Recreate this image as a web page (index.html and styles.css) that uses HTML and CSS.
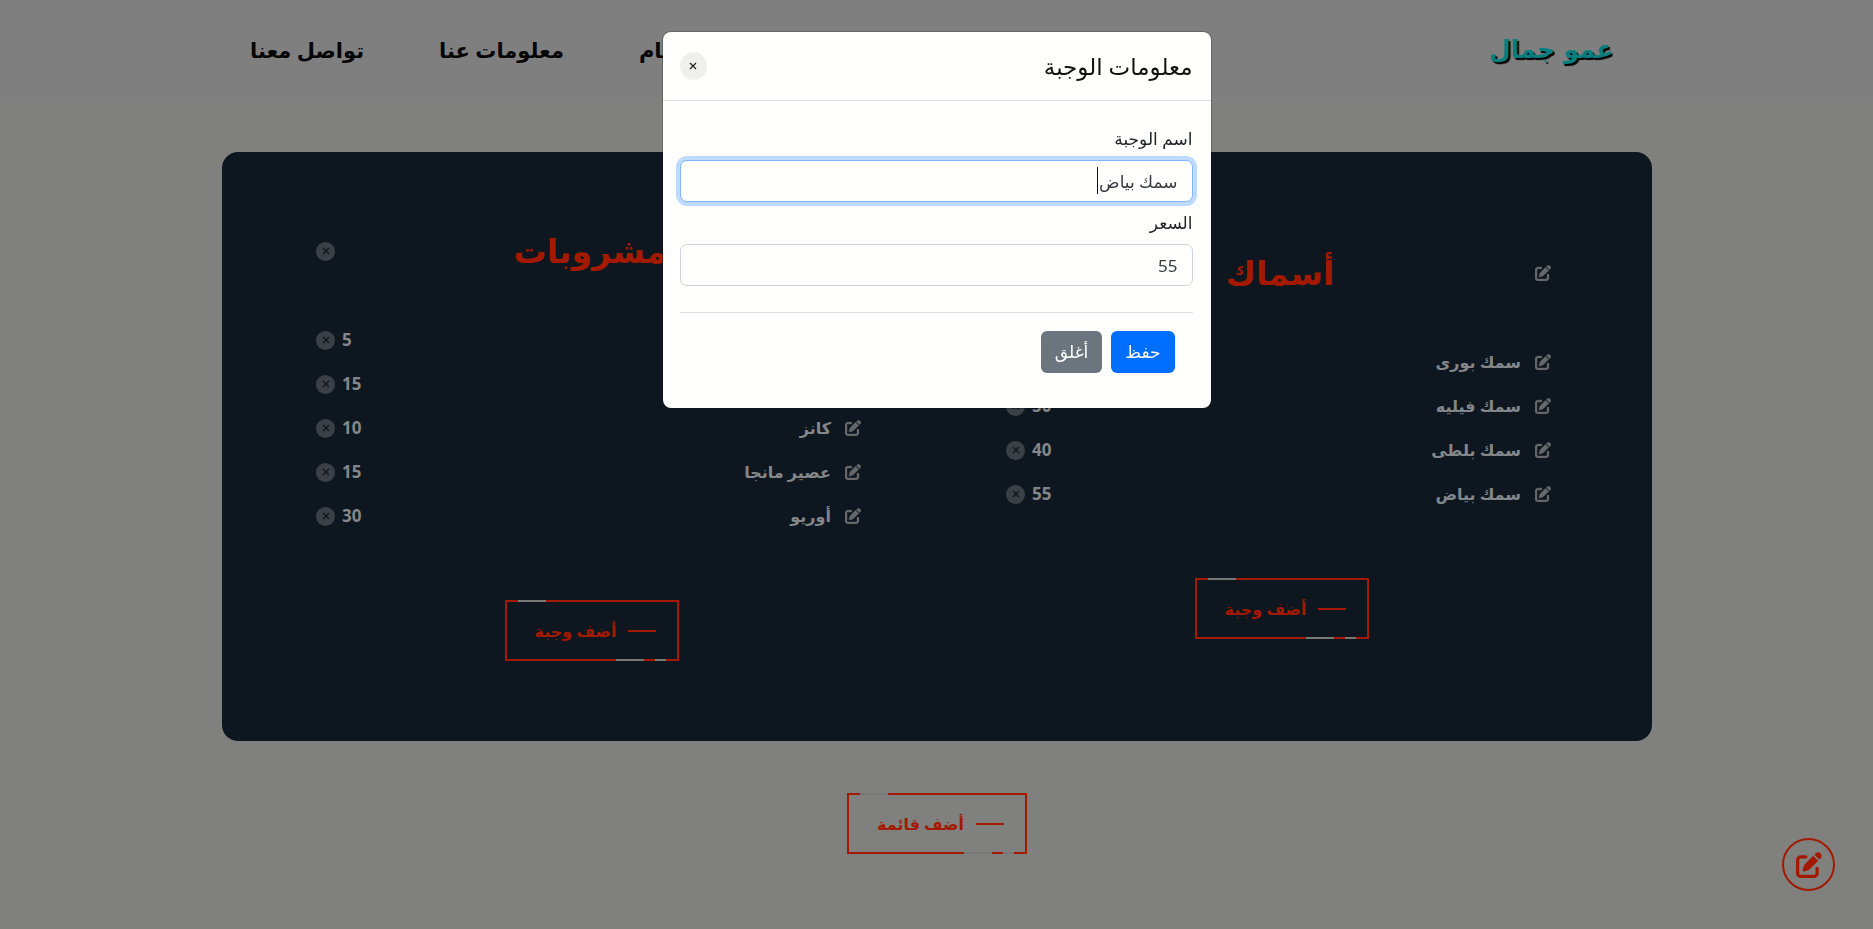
FILE: index.html
```html
<!DOCTYPE html>
<html lang="ar" dir="rtl">
<head>
<meta charset="utf-8">
<title>عمو جمال</title>
<link rel="stylesheet" href="styles.css">
</head>
<body>
<svg class="sprite" aria-hidden="true">
  <symbol id="edit" viewBox="0 0 512 512"><path d="M471.6 21.7c-21.9-21.9-57.3-21.9-79.2 0L362.3 51.7l97.9 97.9 30.1-30.1c21.9-21.9 21.9-57.3 0-79.2L471.6 21.7zm-299.2 220c-6.1 6.1-10.8 13.6-13.5 21.9l-29.6 88.8c-2.9 8.6-.6 18.1 5.8 24.6s15.9 8.7 24.6 5.8l88.8-29.6c8.2-2.7 15.7-7.4 21.9-13.5L437.7 172.3 339.7 74.3 172.4 241.7zM96 64C43 64 0 107 0 160V416c0 53 43 96 96 96H352c53 0 96-43 96-96V320c0-17.7-14.3-32-32-32s-32 14.3-32 32v96c0 17.7-14.3 32-32 32H96c-17.7 0-32-14.3-32-32V160c0-17.7 14.3-32 32-32h96c17.7 0 32-14.3 32-32s-14.3-32-32-32H96z"/></symbol>
  <symbol id="x" viewBox="0 0 8 8"><path d="M1 1l6 6M7 1L1 7" fill="none" stroke="currentColor" stroke-width="1.3"/></symbol>
</svg>
<header class="site-header">
  <a class="logo" href="#">عمو جمال</a>
  <nav class="nav">
    <a href="#">الرئيسية</a>
    <a href="#">قائمة الطعام</a>
    <a href="#">معلومات عنا</a>
    <a href="#">تواصل معنا</a>
  </nav>
</header>
<main>
  <div class="menu-card">
    <section class="menu">
      <div class="menu-head">
        <button class="icon-btn" aria-label="تعديل القائمة"><svg class="edit"><use href="#edit"/></svg></button>
        <h2>أسماك</h2>
        <button class="remove" aria-label="حذف القائمة"><svg><use href="#x"/></svg></button>
      </div>
      <ul class="items">
        <li><button class="icon-btn" aria-label="تعديل"><svg class="edit"><use href="#edit"/></svg></button><span class="name">سمك بورى</span><span class="price">40</span><button class="remove" aria-label="حذف"><svg><use href="#x"/></svg></button></li>
        <li><button class="icon-btn" aria-label="تعديل"><svg class="edit"><use href="#edit"/></svg></button><span class="name">سمك فيليه</span><span class="price">50</span><button class="remove" aria-label="حذف"><svg><use href="#x"/></svg></button></li>
        <li><button class="icon-btn" aria-label="تعديل"><svg class="edit"><use href="#edit"/></svg></button><span class="name">سمك بلطى</span><span class="price">40</span><button class="remove" aria-label="حذف"><svg><use href="#x"/></svg></button></li>
        <li><button class="icon-btn" aria-label="تعديل"><svg class="edit"><use href="#edit"/></svg></button><span class="name">سمك بياض</span><span class="price">55</span><button class="remove" aria-label="حذف"><svg><use href="#x"/></svg></button></li>
      </ul>
      <button class="add"><span class="dash"></span>أضف وجبة</button>
    </section>
    <section class="menu">
      <div class="menu-head">
        <button class="icon-btn" aria-label="تعديل القائمة"><svg class="edit"><use href="#edit"/></svg></button>
        <h2>مشروبات</h2>
        <button class="remove" aria-label="حذف القائمة"><svg><use href="#x"/></svg></button>
      </div>
      <ul class="items">
        <li><button class="icon-btn" aria-label="تعديل"><svg class="edit"><use href="#edit"/></svg></button><span class="name">شاى</span><span class="price">5</span><button class="remove" aria-label="حذف"><svg><use href="#x"/></svg></button></li>
        <li><button class="icon-btn" aria-label="تعديل"><svg class="edit"><use href="#edit"/></svg></button><span class="name">قهوة</span><span class="price">15</span><button class="remove" aria-label="حذف"><svg><use href="#x"/></svg></button></li>
        <li><button class="icon-btn" aria-label="تعديل"><svg class="edit"><use href="#edit"/></svg></button><span class="name">كانز</span><span class="price">10</span><button class="remove" aria-label="حذف"><svg><use href="#x"/></svg></button></li>
        <li><button class="icon-btn" aria-label="تعديل"><svg class="edit"><use href="#edit"/></svg></button><span class="name">عصير مانجا</span><span class="price">15</span><button class="remove" aria-label="حذف"><svg><use href="#x"/></svg></button></li>
        <li><button class="icon-btn" aria-label="تعديل"><svg class="edit"><use href="#edit"/></svg></button><span class="name">أوريو</span><span class="price">30</span><button class="remove" aria-label="حذف"><svg><use href="#x"/></svg></button></li>
      </ul>
      <button class="add"><span class="dash"></span>أضف وجبة</button>
    </section>
  </div>
  <button class="add add-menu"><span class="dash"></span>أضف قائمة</button>
</main>
<button class="fab" aria-label="تعديل"><svg><use href="#edit"/></svg></button>

<div class="overlay">
  <div class="modal" role="dialog" aria-modal="true" aria-labelledby="modal-title">
    <div class="modal-head">
      <h5 id="modal-title">معلومات الوجبة</h5>
      <button class="close" aria-label="إغلاق"><svg><use href="#x"/></svg></button>
    </div>
    <form class="modal-body">
      <label for="meal-name">اسم الوجبة</label>
      <div class="field">
        <input id="meal-name" type="text" value="سمك بياض" autofocus>
        <span class="caret"></span>
      </div>
      <label for="meal-price">السعر</label>
      <input id="meal-price" type="text" value="55">
      <div class="modal-foot">
        <button type="button" class="btn save">حفظ</button>
        <button type="button" class="btn cancel">أغلق</button>
      </div>
    </form>
  </div>
</div>
</body>
</html>
```
FILE: styles.css
```css
* { box-sizing: border-box; }
body {
  margin: 0;
  min-height: 100vh;
  background: #80807e;
  color: #212529;
  font: 16px/24px "Noto Sans", "DejaVu Sans", sans-serif;
}
button { font: inherit; border: 0; padding: 0; background: none; cursor: pointer; }
a { color: inherit; text-decoration: none; }
h2, h5, ul { margin: 0; padding: 0; }
.sprite { position: absolute; width: 0; height: 0; }

.site-header {
  display: flex;
  align-items: center;
  justify-content: space-between;
  height: 99px;
  padding: 0 250px;
  background: #7f7f7f;
}
.logo {
  padding: 0 10px;
  color: #067d7f;
  font: bold 25px/40px "DejaVu Sans", sans-serif;
  text-shadow: 2px 2px 1px #000;
}
.nav { display: flex; gap: 75px; color: #060606; font-size: 21px; font-weight: 600; }

main { display: flex; flex-direction: column; align-items: center; padding: 53px 221px 72px 222px; }
.menu-card {
  display: flex;
  align-items: center;
  align-self: stretch;
  padding: 80px 25px;
  border-radius: 16px;
  background: #0e1720;
}
.menu { flex: 1; display: flex; flex-direction: column; align-items: center; }
.menu-head, .items { align-self: stretch; padding-inline: 76px 69px; }
.menu-head { display: flex; align-items: center; justify-content: space-between; height: 38px; }
.menu-head h2 { color: #a31a00; font-size: 33px; line-height: 38px; }
.items { margin: 48px 0 62px; list-style: none; }
.items li { display: flex; align-items: center; height: 44px; color: #84878a; font-weight: 700; }
.icon-btn { display: flex; color: #66686a; }
.edit { width: 16px; height: 16px; overflow: visible; fill: currentColor; stroke: currentColor; stroke-width: 12px; }
.name { flex: 1; padding-inline-start: 14px; }
.price { padding-left: 7px; font-size: 17px; }
.remove {
  display: flex;
  align-items: center;
  justify-content: center;
  width: 19px;
  height: 19px;
  border-radius: 50%;
  background: #3b4047;
  color: #10161d;
}
.remove svg { width: 8px; height: 8px; }

.add {
  position: relative;
  display: flex;
  align-items: center;
  gap: 12px;
  height: 61px;
  padding: 0 21px 0 28px;
  border: 2px solid #a31a00;
  color: #a31a00;
  font-size: 16px;
  font-weight: 700;
}
.dash { width: 28px; height: 2px; background: #a31a00; }
.add::before { content: ""; position: absolute; top: -2px; left: 11px; width: 28px; height: 2px; background: #777; }
.add::after {
  content: "";
  position: absolute;
  bottom: -2px;
  right: 11px;
  width: 50px;
  height: 2px;
  background: linear-gradient(to right, #777 28px, transparent 28px 39px, #777 39px);
}
.add-menu { margin-top: 52px; }

.fab {
  position: fixed;
  right: 38px;
  bottom: 38px;
  display: flex;
  align-items: center;
  justify-content: center;
  width: 53px;
  height: 53px;
  border: 2px solid #a31a00;
  border-radius: 50%;
  color: #a31a00;
}
.fab svg { width: 26px; height: 26px; fill: currentColor; }

.overlay { position: fixed; inset: 0; padding: 32px 16px; }
.modal {
  max-width: 548px;
  margin: 0 auto;
  border-radius: 8px;
  background: #fffffd;
  box-shadow: 0 0 0 1px #00000033;
}
.modal-head {
  display: flex;
  align-items: center;
  justify-content: space-between;
  height: 69px;
  padding: 0 18px 0 17px;
  border-bottom: 1px solid #dbe0e6;
}
.modal-head h5 { color: #111; font-size: 23px; font-weight: 400; line-height: 32px; }
.close {
  display: flex;
  align-items: center;
  justify-content: center;
  width: 27px;
  height: 28px;
  border-radius: 50%;
  background: #efefed;
  color: #222;
}
.close svg { width: 8px; height: 8px; }
.modal-body { display: flex; flex-direction: column; padding: 17px 18px 35px 17px; font-size: 17px; }
.modal-body label { height: 42px; line-height: 42px; }
.modal-body input {
  width: 100%;
  height: 42px;
  padding: 0 14px;
  border: 1px solid #ced4da;
  border-radius: 7px;
  background: #fffffd;
  color: #373b40;
  font: inherit;
}
.modal-body input:focus { outline: 0; border-color: #80b5ff; box-shadow: 0 0 0 4px #bfdbff; }
.field { position: relative; display: flex; }
.field input { caret-color: transparent; }
.caret { position: absolute; top: 7px; right: 95px; width: 1px; height: 27px; background: #111; }
.modal-foot { display: flex; gap: 9px; margin-top: 26px; padding: 18px 18px 0; border-top: 1px solid #dbe0e6; }
.btn { height: 42px; padding: 0 14px; border-radius: 6px; color: #fff; }
.save { background: #006eff; }
.cancel { background: #6c757d; }
```
